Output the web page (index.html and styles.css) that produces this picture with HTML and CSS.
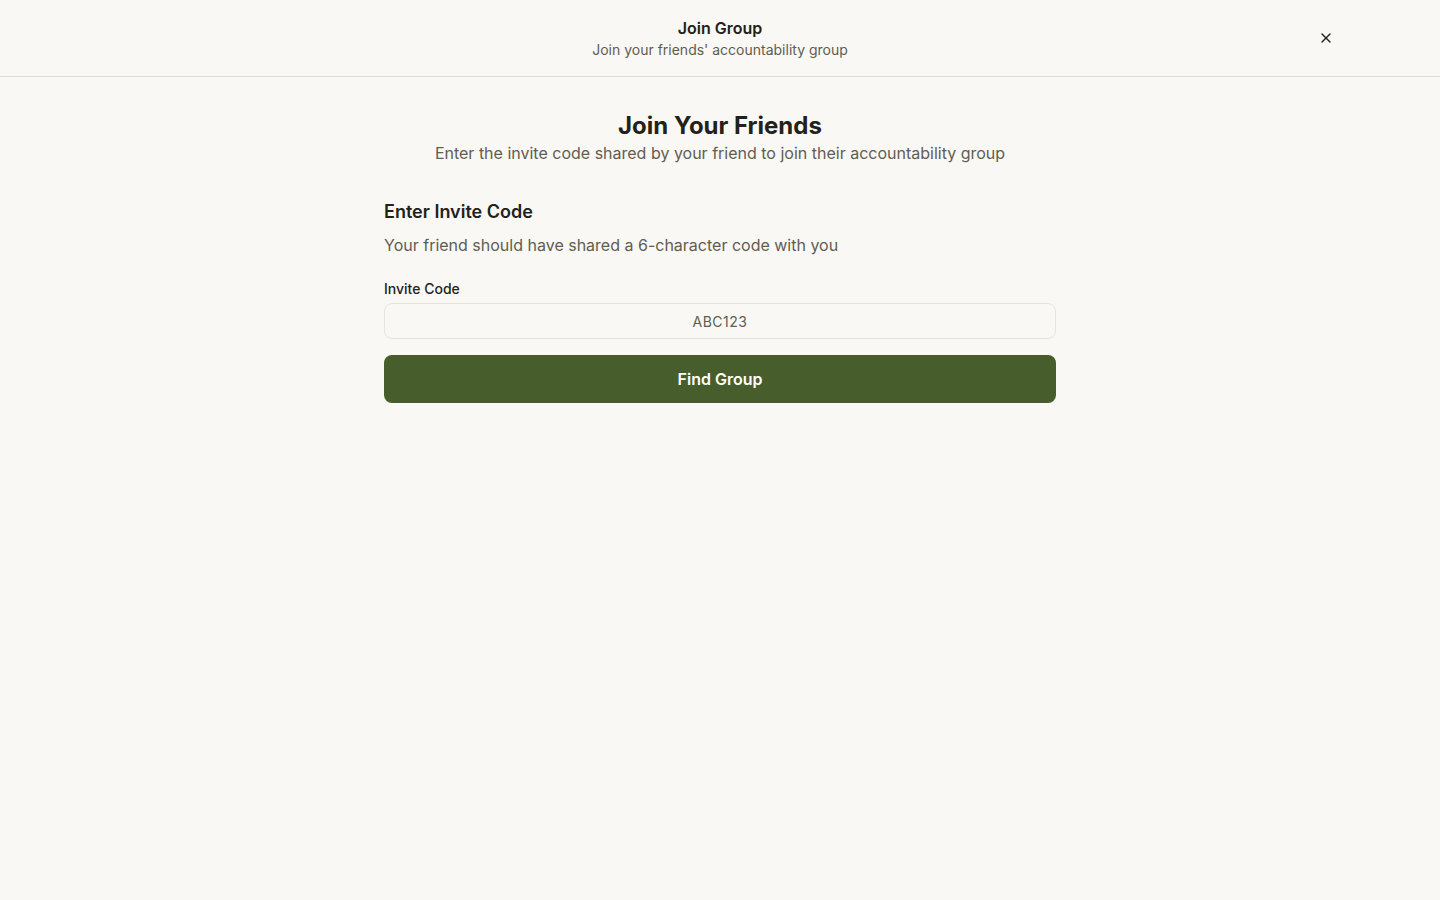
FILE: index.html
```html
<!DOCTYPE html>
<html lang="en">
<head>
<meta charset="utf-8">
<title>Join Group</title>
<link rel="stylesheet" href="styles.css">
</head>
<body>
<header class="topbar">
  <div class="topbar-text">
    <h1 class="topbar-title">Join Group</h1>
    <p class="topbar-sub">Join your friends' accountability group</p>
  </div>
  <button class="close-btn" aria-label="Close">
    <svg width="16" height="16" viewBox="0 0 24 24" fill="none" stroke="currentColor" stroke-width="2" stroke-linecap="round" stroke-linejoin="round"><path d="M18 6 6 18"/><path d="m6 6 12 12"/></svg>
  </button>
</header>
<main class="content">
  <section class="hero">
    <h2 class="hero-title">Join Your Friends</h2>
    <p class="hero-sub">Enter the invite code shared by your friend to join their accountability group</p>
  </section>
  <section class="card">
    <h3 class="card-title">Enter Invite Code</h3>
    <p class="card-desc">Your friend should have shared a 6-character code with you</p>
    <label class="field-label" for="code">Invite Code</label>
    <input class="field-input" id="code" type="text" placeholder="ABC123">
    <button class="primary-btn">Find Group</button>
  </section>
</main>
</body>
</html>
```
FILE: styles.css
```css
* { box-sizing: border-box; }
html, body { margin: 0; padding: 0; }
body {
  background: #f9f8f4;
  font-family: Inter, "Noto Sans", sans-serif;
  color: #23221a;
  min-height: 100vh;
}
.topbar {
  height: 77px;
  border-bottom: 1px solid #dddbd4;
  display: flex;
  align-items: center;
  justify-content: center;
  position: relative;
}
.topbar-text { text-align: center; }
.topbar-title {
  margin: 0;
  font-size: 16px;
  line-height: 22px;
  font-weight: 600;
  color: #23221a;
}
.topbar-sub {
  margin: 1px 0 0;
  font-size: 14px;
  line-height: 20px;
  color: #5f5d52;
}
.close-btn {
  position: absolute;
  right: 106px;
  top: 30px;
  width: 16px;
  height: 16px;
  padding: 0;
  border: none;
  background: transparent;
  color: #23221a;
  display: flex;
  align-items: center;
  justify-content: center;
  cursor: pointer;
}
.content {
  width: 672px;
  margin: 0 auto;
  padding-top: 33px;
}
.hero { text-align: center; }
.hero-title {
  margin: 0;
  font-size: 24px;
  line-height: 31px;
  font-weight: 700;
  color: #23221a;
}
.hero-sub {
  margin: 0;
  font-size: 16px;
  line-height: 24px;
  color: #5f5d52;
}
.card { margin-top: 34px; display: flex; flex-direction: column; }
.card-title {
  margin: 0;
  font-size: 18px;
  line-height: 26px;
  font-weight: 600;
  color: #23221a;
}
.card-desc {
  margin: 8px 0 0;
  font-size: 16px;
  line-height: 24px;
  color: #5f5d52;
}
.field-label {
  margin-top: 22px;
  font-size: 14px;
  line-height: 20px;
  font-weight: 500;
  color: #23221a;
}
.field-input {
  margin-top: 4px;
  height: 36px;
  width: 100%;
  border: 1px solid #e6e4dd;
  border-radius: 8px;
  background: #f9f8f4;
  text-align: center;
  font-family: inherit;
  font-size: 14px;
  letter-spacing: 0.5px;
  color: #23221a;
  outline: none;
}
.field-input::placeholder { color: #5f5d52; }
.primary-btn {
  margin-top: 16px;
  height: 48px;
  width: 100%;
  border: none;
  border-radius: 8px;
  background: #475d2c;
  color: #ffffff;
  font-family: inherit;
  font-size: 16px;
  font-weight: 600;
  cursor: pointer;
}
```
